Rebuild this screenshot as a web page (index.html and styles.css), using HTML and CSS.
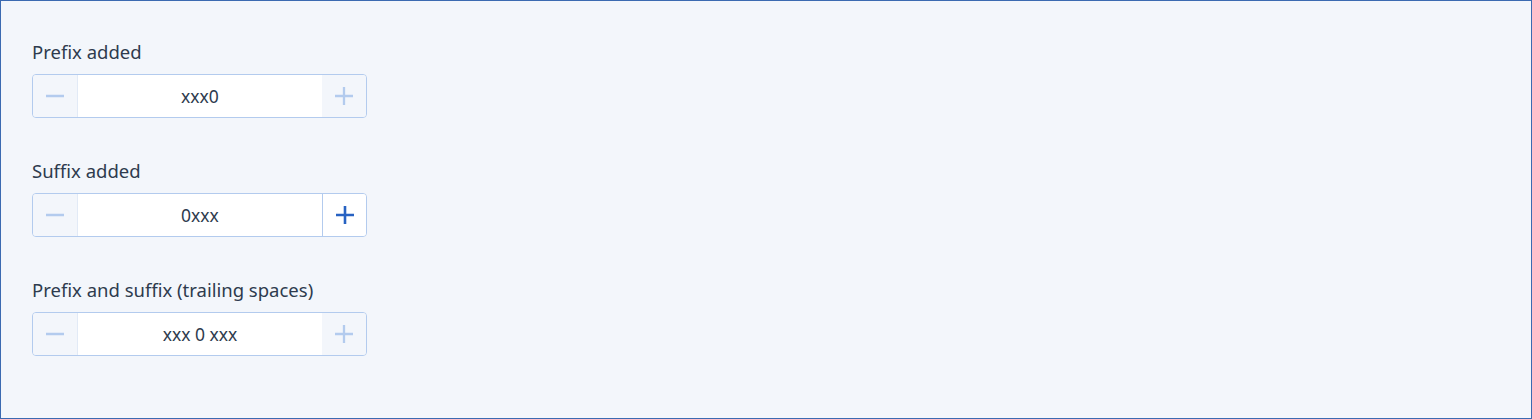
FILE: index.html
```html
<!DOCTYPE html>
<html>
<head>
  <title>Number input</title>
  <link rel="stylesheet" href="styles.css">
</head>
<body>
  <div class="page">
    <div class="field">
      <label class="field-label" for="prefix">Prefix added</label>
      <div class="stepper">
        <button class="step" disabled>
          <svg width="20" height="20" viewBox="0 0 20 20"><path d="M1 10h18" /></svg>
        </button>
        <input class="step-value" id="prefix" type="text" value="xxx0">
        <button class="step" disabled>
          <svg width="20" height="20" viewBox="0 0 20 20"><path d="M1 10h18M10 1v18" /></svg>
        </button>
      </div>
    </div>

    <div class="field">
      <label class="field-label" for="suffix">Suffix added</label>
      <div class="stepper">
        <button class="step" disabled>
          <svg width="20" height="20" viewBox="0 0 20 20"><path d="M1 10h18" /></svg>
        </button>
        <input class="step-value" id="suffix" type="text" value="0xxx">
        <button class="step step-active">
          <svg width="20" height="20" viewBox="0 0 20 20"><path d="M1 10h18M10 1v18" /></svg>
        </button>
      </div>
    </div>

    <div class="field">
      <label class="field-label" for="both">Prefix and suffix (trailing spaces)</label>
      <div class="stepper">
        <button class="step" disabled>
          <svg width="20" height="20" viewBox="0 0 20 20"><path d="M1 10h18" /></svg>
        </button>
        <input class="step-value" id="both" type="text" value="xxx 0 xxx">
        <button class="step" disabled>
          <svg width="20" height="20" viewBox="0 0 20 20"><path d="M1 10h18M10 1v18" /></svg>
        </button>
      </div>
    </div>
  </div>
</body>
</html>
```

FILE: styles.css
```css
/* Stepper demo */
body {
  margin: 0;
  font-family: "Noto Sans", "Open Sans", sans-serif;
  color: #2e3b4e;
}

.page {
  box-sizing: border-box;
  height: 419px;
  border: 1px solid #3b6ab1;
  background-color: #f3f6fb;
  padding: 38px 31px 0;
}

.field {
  margin-bottom: 40px;
}

.field-label {
  display: block;
  font-size: 18.5px;
  line-height: 26px;
  margin-bottom: 9px;
}

.stepper {
  display: flex;
  box-sizing: border-box;
  width: 335px;
  height: 44px;
  border: 1px solid #b3cbee;
  border-radius: 4px;
  overflow: hidden;
  background-color: #f3f6fb;
}

.step {
  flex: 0 0 44px;
  display: flex;
  align-items: center;
  justify-content: center;
  padding: 0;
  border: none;
  background-color: #f3f6fb;
}

.step svg {
  stroke: #b3cbee;
  stroke-width: 2.3;
  fill: none;
}

.step-active {
  background-color: #ffffff;
  border-left: 1px solid #b3cbee;
  cursor: pointer;
}

.step-active svg {
  stroke: #2762c2;
  stroke-width: 2.6;
}

.step-value {
  flex: 1;
  min-width: 0;
  border: none;
  border-left: 1px solid #e2eaf6;
  outline: none;
  background-color: #ffffff;
  font-family: inherit;
  font-size: 17.5px;
  color: #2e3b4e;
  text-align: center;
  padding: 0;
}
```
